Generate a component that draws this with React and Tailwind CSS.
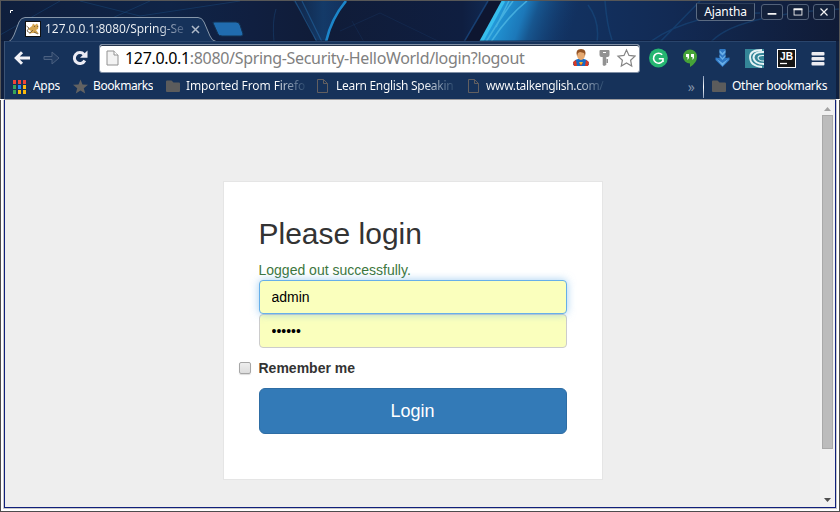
import React from "react";

const UI = "font-['Noto_Sans','Open_Sans',sans-serif]";

function ThemeArt() {
  return (
    <svg className="absolute inset-0 h-[41px] w-full" viewBox="0 0 840 41" preserveAspectRatio="none" aria-hidden="true">
      <defs>
        <linearGradient id="sky" x1="0" x2="1" y1="0" y2="0">
          <stop offset="0" stopColor="#0f1f3d" />
          <stop offset="0.2" stopColor="#0f2447" />
          <stop offset="0.3" stopColor="#101f40" />
          <stop offset="0.38" stopColor="#101c38" />
          <stop offset="0.55" stopColor="#0f1e40" />
          <stop offset="0.62" stopColor="#123566" />
          <stop offset="0.8" stopColor="#122a54" />
          <stop offset="1" stopColor="#101b36" />
        </linearGradient>
        <linearGradient id="beam" gradientUnits="userSpaceOnUse" x1="492" y1="20" x2="565" y2="46">
          <stop offset="0" stopColor="#229bdb" />
          <stop offset="0.35" stopColor="#1c78b9" />
          <stop offset="0.5" stopColor="#17568f" />
          <stop offset="1" stopColor="#133a6e" stopOpacity="0" />
        </linearGradient>
        <linearGradient id="veil" gradientUnits="userSpaceOnUse" x1="290" y1="0" x2="345" y2="0">
          <stop offset="0" stopColor="#154478" stopOpacity="0.2" />
          <stop offset="0.6" stopColor="#154478" />
          <stop offset="1" stopColor="#14386a" />
        </linearGradient>
      </defs>
      <rect width="840" height="41" fill="url(#sky)" />
      <path d="M80 0L140 15L240 0M110 18L150 0M0 34L60 0M276 8Q272 20 274 41" fill="none" stroke="#1c4f88" strokeWidth="1" opacity="0.4" />
      <path d="M293 0L346 0Q331 20 326 41L316 41Q308 18 293 0Z" fill="url(#veil)" opacity="0.75" />
      <path d="M295 0L317 41M302 0L322 41" stroke="#2368a5" strokeWidth="1.2" opacity="0.55" />
      <path d="M346 0Q331 18 326 41" fill="none" stroke="#1c86ca" strokeWidth="2.6" />
      <path d="M340 30L380 12L440 41M352 20L364 41" fill="none" stroke="#1b3866" opacity="0.35" />
      <path d="M488 0L504 0L480 41L464 41Z" fill="#0e1630" />
      <path d="M488 0L464 41" stroke="#1a4880" strokeWidth="1.5" opacity="0.8" />
      <path d="M503 0L580 0L580 41L480 41Z" fill="url(#beam)" />
      <path d="M503.500 0L481 41" stroke="#37bdec" strokeWidth="3.6" />
      <path d="M513 0Q499 19 486 41M527 0Q507 16 491 41M509 0L496 26" fill="none" stroke="#4cb6e4" strokeWidth="1.6" opacity="0.8" />
      <path d="M588 4Q600 20 597 41M605 0Q607 25 612 39M650 41Q690 12 760 12M711 41Q735 14 840 8M700 0L660 41" fill="none" stroke="#1c5a94" strokeWidth="1.5" opacity="0.4" />
      <rect y="39.500" width="840" height="1.500" fill="#0b152b" opacity="0.7" />
    </svg>
  );
}

function CatIcon() {
  return (
    <svg className="h-4 w-4 shrink-0" viewBox="0 0 16 16">
      <rect x="0.5" y="0.5" width="15" height="15" fill="#fff" stroke="#111" />
      <path d="M7 5L8 2.500L10 4L12 2.500L13.500 5L13 8L11 9L14 13L10 12L7 12L4 13L6 10L3 8Z" fill="#d5a650" />
      <path d="M1.500 5L4 7L2 10L5 12L8 9M9 5.500h1M12 5.500h1M9 11L13 13" stroke="#665033" strokeWidth="0.8" fill="none" />
    </svg>
  );
}

function PageIcon({ light }) {
  return light ? (
    <svg className="h-[16px] w-[13px] shrink-0" viewBox="0 0 13 16">
      <path d="M1 1H8L12 5V15H1Z" fill="#f3f3f3" stroke="#929292" />
      <path d="M8 1V5H12" fill="#fff" stroke="#929292" />
    </svg>
  ) : (
    <svg className="h-[15px] w-[11px] shrink-0" viewBox="0 0 11 15">
      <path d="M.5 .5H6.5L10.5 4.5V13.5H.5ZM6.5 .5V4.5H10.5" fill="none" stroke="#625f60" />
    </svg>
  );
}

function FolderIcon() {
  return (
    <svg className="h-[13px] w-[15px] shrink-0" viewBox="0 0 15 13">
      <path d="M1 .5H5.5L7.5 2.5H13Q14 2.5 14 3.5V11Q14 12 13 12H1Q0 12 0 11V1.5Q0 .5 1 .5Z" fill="#5c5c5c" />
    </svg>
  );
}

function AppsIcon() {
  const colors = ["#f14436", "#f14436", "#f14436", "#36a65a", "#2589f2", "#f9b90c", "#36a65a", "#f9b90c", "#f9b90c"];
  return (
    <div className="grid h-[14px] w-[14px] shrink-0 grid-cols-[3px_3px_3px] grid-rows-[4px_4px_4px] gap-x-[2px] gap-y-px">
      {colors.map((c, i) => <i key={i} style={{ backgroundColor: c }} />)}
    </div>
  );
}

function TitleBar() {
  return (
    <header className="relative h-[41px] shrink-0 overflow-hidden border-t border-[#575757]">
      <ThemeArt />
      <svg className="absolute left-0 top-0 h-[41px] w-[250px]" viewBox="0 1 250 41">
        <path d="M9 42Q12 40 14 35L19 22Q21 18 25 18H198Q202 18 204 22L210 36Q212 41 216 42Z" fill="#16325a" />
        <path d="M9 41.5Q12 40 14 35L19 22Q21 17.500 25 17.500H198Q202 17.500 204 22L210 36Q212 41 216 41.5" fill="none" stroke="#8797aa" />
        <path d="M213 23Q212 22 215 22H236Q239 22 240 25L243 34Q243 36 241 36H222Q219 36 218 34Z" fill="#206caf" stroke="#123253" />
        <path d="M10.5 13V10.5H13" fill="none" stroke="#fff" />
      </svg>
      <div className="relative flex h-full items-start">
        <div className="ml-[25px] mt-[20px] flex h-4 w-[178px] items-center">
          <CatIcon />
          <span className={`${UI} ml-1 w-[141px] overflow-hidden whitespace-nowrap bg-gradient-to-r from-[#f0f3f6] from-80% to-[#3a5175] bg-clip-text text-[12px] tracking-[-0.05px] text-transparent`}>127.0.0.1:8080/Spring-Se</span>
          <svg className="ml-[5px] h-[9px] w-[9px]" viewBox="0 0 9 9"><path d="M1 1L8 8M8 1L1 8" stroke="#aeb9c8" strokeWidth="1.5" /></svg>
        </div>
        <div className="ml-auto mr-[5px] mt-[2px] flex items-start gap-[6px]">
          <div className={`${UI} flex h-[18px] w-[59px] items-center justify-center rounded-b border border-[#5b6b82] border-t-[#2c3e59] bg-[#14233f] text-[12px] tracking-[-0.1px] text-white`}>Ajantha</div>
          <div className="flex h-[17px] gap-[4px] pt-px">
            <Control><path d="M6 10H16" stroke="#f4f4f4" strokeWidth="2" /></Control>
            <Control><rect x="6.5" y="4.5" width="9" height="7" fill="none" stroke="#f4f4f4" /><path d="M6 5H16" stroke="#f4f4f4" strokeWidth="2" /></Control>
            <Control><path d="M7 4L15 12M15 4L7 12" stroke="#f4f4f4" strokeWidth="1.4" /></Control>
          </div>
        </div>
      </div>
      <i className="absolute inset-y-0 left-0 w-px bg-[#575757]" />
      <i className="absolute inset-y-0 right-0 w-px bg-[#575757]" />
    </header>
  );
}

function Control({ children }) {
  return <svg className="h-[16px] w-[22px] rounded-[3px] border border-[#53627a] bg-[#13213b]" viewBox="0 0 22 16">{children}</svg>;
}

function Toolbar() {
  return (
    <div className="flex h-[33px] shrink-0 items-center border-t border-[#2a456c] pl-[8px]">
      <svg className="h-[18px] w-[76px] shrink-0" viewBox="0 0 76 18">
        <path d="M17 9H4M9 3.200L3.200 9L9 14.800" fill="none" stroke="#f2f2f7" strokeWidth="3" />
        <path d="M31 7.5H39V3L46 9L39 15V10.5H31Z" fill="#223c62" stroke="#4b6080" />
        <path d="M71 5.4A5.5 5.5 0 1 0 71.8 11.500" fill="none" stroke="#ececf4" strokeWidth="3" />
        <path d="M74.500 1.500V8.700H67Z" fill="#ececf4" />
      </svg>
      <div className="ml-[10px] flex h-[29px] w-[541px] items-center rounded-[3px] border border-[#7f8ea4] bg-white pl-[6px] shadow-[inset_0_1px_0_#24344c]">
        <PageIcon light />
        <span className={`${UI} ml-[6px] w-[440px] whitespace-nowrap text-[16px] tracking-[-0.33px] text-[#808080]`}><span className="text-black">127.0.0.1</span>:8080/Spring-Security-HelloWorld/login?logout</span>
        <svg className="ml-auto mr-[3px] h-[20px] w-[64px] shrink-0" viewBox="0 0 64 20">
          <path d="M1 17Q1 12 6 11H12Q17 12 17 17L14 18H4Z" fill="#176bc5" />
          <path d="M1 14L4 12L5 18H2ZM17 14L14 12L13 18H16ZM5 12L9 18L13 12L11 15H7Z" fill="#d73924" />
          <ellipse cx="9" cy="7" rx="4" ry="5" fill="#e6a970" />
          <path d="M5 8Q3 1 9 1Q15 1 13 8L12 5L8 4L6 5Z" fill="#935324" />
          <path d="M7 14H11L9 17Z" fill="#f0b52e" />
          <path d="M28.500 2H36.500Q37.500 2 37.500 3V7Q37.500 9 35.500 9H34.300V17L32 18L30.700 17V9H29.500Q27.500 9 27.500 7V3Q27.500 2 28.500 2ZM31 4V5H34V4ZM34 11H36V15H34Z" fill="#929292" fillRule="evenodd" />
          <path d="M54.5 2L57 7.4L63 8.1L58.6 12.2L59.7 18L54.5 15L49.3 18L50.4 12.2L46 8.1L52 7.4Z" fill="none" stroke="#858585" strokeWidth="1.2" />
        </svg>
      </div>
      <svg className="ml-[9px] h-[20px] w-[178px] shrink-0" viewBox="0 0 178 20">
        <circle cx="9.4" cy="10" r="9.4" fill="#25b571" />
        <path d="M13.2 6.8A5 5 0 1 0 13.8 12.8M9.8 10.8H14V14" fill="none" stroke="#fff" strokeWidth="1.6" />
        <path d="M41 1.5A7 7 0 0 1 48 8.5Q48 15 41 19V15.5A7 7 0 0 1 41 1.5Z" fill="#46a338" />
        <path d="M37 6H40V10L38.5 12V9H37ZM42 6H45V10L43.5 12V9H42Z" fill="#fff" />
        <path d="M70.500 1H76.500V10L80.500 9.500V12L73.500 19L66.500 12V9.500L70.500 10Z" fill="#2f78c4" />
        <path d="M70.500 2L73.500 5L76.500 2V4.500L73.500 7.500L70.500 4.500ZM70.500 7L73.500 10L76.500 7V8.500L73.500 12L70.500 8.500ZM67 10.500L73.500 15L80 10.500L73.500 18Z" fill="#78bdf0" opacity="0.8" />
        <rect x="96" y="1" width="19" height="19" fill="#348698" />
        <path d="M113 2Q101 2 101 9Q101 18 113 19" fill="none" stroke="#e6f3f5" strokeWidth="1.8" />
        <path d="M115 4Q104.500 3.500 104.500 10Q106 16 115 16" fill="none" stroke="#e6f3f5" strokeWidth="2" />
        <path d="M115 7.500Q109 7 109 10Q109.500 13 115 13" fill="none" stroke="#e6f3f5" strokeWidth="1.1" />
        <rect x="128.5" y="1.5" width="18" height="18" fill="#151515" stroke="#fff" />
        <path d="M131 15.500H138" stroke="#fff" strokeWidth="1.3" />
        <text x="131" y="11.500" textLength="13" lengthAdjust="spacingAndGlyphs" fill="#fff" className="font-['Liberation_Sans',sans-serif] text-[10px] font-bold">JB</text>
        <rect x="162.500" y="4" width="13" height="3.5" rx="1" fill="#ececf1" />
        <rect x="162.500" y="9" width="13" height="3.5" rx="1" fill="#ececf1" />
        <rect x="162.500" y="14" width="13" height="3.5" rx="1" fill="#ececf1" />
      </svg>
    </div>
  );
}

function Bookmark({ icon, children, className }) {
  return <div className={`flex shrink-0 items-center ${className}`}>{icon}<span className="-mt-px overflow-hidden whitespace-nowrap">{children}</span></div>;
}

const fade = "bg-gradient-to-r from-white from-75% to-[#29476b] bg-clip-text text-transparent";

function BookmarkBar() {
  return (
    <nav className={`${UI} flex h-[25px] shrink-0 items-center pl-[8px] text-[12px] text-white`}>
      <Bookmark icon={<AppsIcon />} className="w-[60px] gap-[6px] tracking-[-0.3px]">Apps</Bookmark>
      <Bookmark icon={<svg className="h-[15px] w-[15px]" viewBox="0 0 15 15"><path d="M7.5 .5L9.5 5.5L15 5.8L10.8 9.2L12.2 14.5L7.5 11.5L2.8 14.5L4.2 9.2L0 5.8L5.5 5.5Z" fill="#626262" /></svg>} className="w-[93px] gap-[5px] tracking-[-0.4px]">Bookmarks</Bookmark>
      <Bookmark icon={<FolderIcon />} className="w-[151px] gap-[5px] tracking-[-0.1px]"><span className={`${fade} block w-[119px] overflow-hidden`}>Imported From Firefo</span></Bookmark>
      <Bookmark icon={<PageIcon />} className="w-[151px] gap-[8px] tracking-[-0.3px]"><span className={`${fade} block w-[118px] overflow-hidden`}>Learn English Speakin</span></Bookmark>
      <Bookmark icon={<PageIcon />} className="w-[145px] gap-[7px] tracking-[-0.35px]"><span className={`${fade} block w-[118px] overflow-hidden`}>www.talkenglish.com/</span></Bookmark>
      <div className="ml-auto mr-[8px] flex items-center">
        <span className="text-[14px] text-[#8090a6]">»</span>
        <i className="ml-[8px] mr-[8px] h-[22px] w-px bg-gradient-to-b from-[#8c9ebb] via-white to-[#8c9ebb]" />
        <FolderIcon /><span className="-mt-px ml-[5px] w-[96px] whitespace-nowrap tracking-[-0.28px]">Other bookmarks</span>
      </div>
    </nav>
  );
}

function LoginCard() {
  return (
    <form className="ml-[217.5px] mt-[81px] flex h-[299px] w-[380px] shrink-0 flex-col border border-[#e5e5e5] bg-white px-[35px] pt-[35px]">
      <h1 className="h-[43px] text-[30px] leading-[33px]">Please login</h1>
      <p className="h-[20px] text-[14px] leading-5 text-[#3c763d]">Logged out successfully.</p>
      <input aria-label="Username" readOnly value="admin" className="relative z-10 h-[34px] w-full shrink-0 rounded border border-[#66afe9] bg-[#faffbd] px-3 text-[14px] text-black shadow-[0_0_8px_rgba(102,175,233,0.6)] outline-none" />
      <input aria-label="Password" readOnly type="password" value="secret" className="h-[34px] w-full shrink-0 rounded border border-[#ccc] bg-[#faffbd] px-3 text-[14px] text-black outline-none" />
      <label className="-ml-5 mt-[10px] flex h-5 items-center text-[14px] font-bold">
        <input type="checkbox" className="mr-[8px] h-[12px] w-[12px] appearance-none rounded-[2px] border border-[#a6a6a6] bg-gradient-to-b from-[#eee] to-[#ddd] shadow-[0_1px_1px_#ddd]" />
        Remember me
      </label>
      <button type="button" className="mt-[10px] h-[46px] w-full shrink-0 rounded-[6px] border border-[#2e6da4] bg-[#337ab7] text-[18px] text-white">Login</button>
    </form>
  );
}

export default function App() {
  return (
    <div className="flex h-[512px] w-[840px] flex-col overflow-hidden bg-white font-['Liberation_Sans',sans-serif] text-[#333]">
      <TitleBar />
      <div className="flex h-[58px] shrink-0 flex-col border-x border-[#575757] bg-[#10203f] px-[3px]">
        <div className="flex flex-1 flex-col border-l border-[#3b5375] bg-[#16325a]">
          <Toolbar />
          <BookmarkBar />
        </div>
      </div>
      <div className="mx-[4px] h-px shrink-0 bg-[#9c9b9d]" />
      <div className="flex h-[412px] border-x border-b border-[#4d4b4d] px-[2px] pb-[2px]">
        <main className="flex min-w-0 flex-1 border-x border-b border-[#c8c8c8]">
          <div className="flex min-w-0 flex-1 border-x border-b border-[#10207b] bg-[#eee]">
            <LoginCard />
            <div className="ml-auto flex w-[15px] flex-col items-center bg-[#f1f1f1]">
              <svg className="mt-[7px] h-[4px] w-[7px]" viewBox="0 0 7 4"><path d="M0 4L3.5 0L7 4Z" fill="#a3a3a3" /></svg>
              <i className="mt-[4px] h-[334px] w-[11px] border border-[#a9a9a9] bg-[#bcbcbc]" />
              <svg className="mb-[5px] mt-auto h-[4px] w-[7px]" viewBox="0 0 7 4"><path d="M0 0H7L3.5 4Z" fill="#505050" /></svg>
            </div>
          </div>
        </main>
      </div>
    </div>
  );
}
